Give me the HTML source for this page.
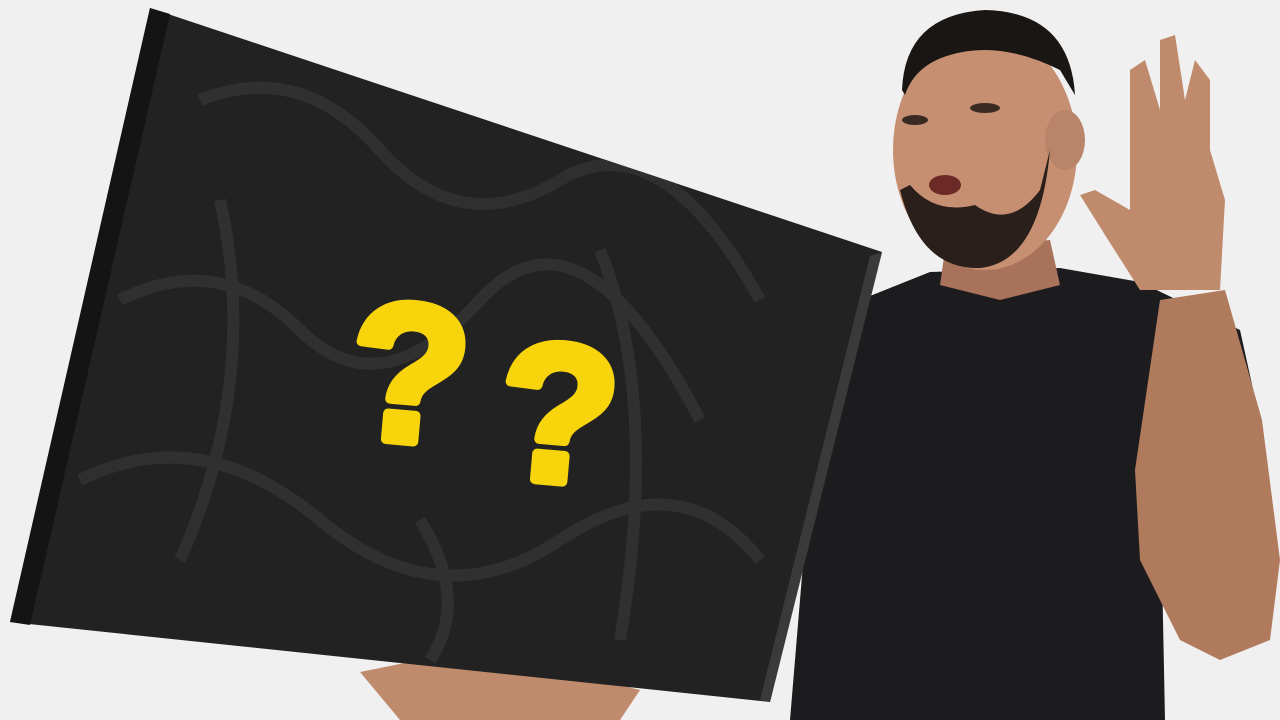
<!DOCTYPE html>
<html><head><style>
html,body{margin:0;padding:0;width:1280px;height:720px;overflow:hidden;background:#efefef}
</style></head><body>
<svg width="1280" height="720" viewBox="0 0 1280 720" xmlns="http://www.w3.org/2000/svg">
<defs><clipPath id="bc"><path d="M150 8 L882 252 L770 702 L10 622 Z"/></clipPath></defs>
<rect width="1280" height="720" fill="#f0f0f0"/>
<!-- shirt -->
<path d="M790 720 L815 420 L860 300 L930 272 L1060 268 L1140 282 L1240 330 L1262 430 L1160 470 L1165 720 Z" fill="#1c1c1e"/>
<!-- arm -->
<path d="M1135 470 L1160 300 L1225 290 L1262 420 L1280 560 L1270 640 L1220 660 L1180 640 L1140 560 Z" fill="#b07a5c"/>
<!-- hand raised -->
<path d="M1140 290 L1105 235 L1080 195 L1095 190 L1130 210 L1130 130 L1130 70 L1145 60 L1160 110 L1160 40 L1175 35 L1185 100 L1195 60 L1210 80 L1210 150 L1225 200 L1220 290 Z" fill="#c08a6c"/>
<!-- neck -->
<path d="M945 250 L1050 240 L1060 285 L1000 300 L940 285 Z" fill="#a8735a"/>
<!-- head -->
<ellipse cx="985" cy="150" rx="92" ry="120" fill="#c68f72"/>
<ellipse cx="1065" cy="140" rx="20" ry="30" fill="#b98469"/>
<!-- hair -->
<path d="M902 90 Q905 15 985 10 Q1070 12 1075 95 L1060 70 Q1000 40 950 55 Q915 65 905 95 Z" fill="#1a1614"/>
<!-- beard -->
<path d="M900 190 Q920 270 980 268 Q1040 262 1050 150 L1040 190 Q1010 230 975 205 Q935 215 910 185 Z" fill="#2a1f1a"/>
<ellipse cx="945" cy="185" rx="16" ry="10" fill="#6b2a25"/>
<ellipse cx="915" cy="120" rx="13" ry="5" fill="#3a2a22"/>
<ellipse cx="985" cy="108" rx="15" ry="5" fill="#3a2a22"/>
<!-- bottom hand -->
<path d="M360 672 L420 660 L560 670 L640 690 L620 720 L400 720 Z" fill="#c08a6c"/>
<!-- box -->
<path d="M150 8 L882 252 L770 702 L10 622 Z" fill="#222222"/>
<g clip-path="url(#bc)" fill="none" stroke="#343434" stroke-width="12" opacity="0.8">
<path d="M200 100 Q300 60 380 150 T560 180 T760 300"/>
<path d="M120 300 Q220 250 300 330 T480 300 T700 420"/>
<path d="M80 480 Q200 420 320 520 T560 540 T760 560"/>
<path d="M220 200 Q260 380 180 560"/>
<path d="M600 250 Q660 400 620 640"/>
<path d="M420 520 Q470 600 430 660"/>
</g>
<path d="M150 8 L170 14 L30 625 L10 622 Z" fill="#141414"/>
<path d="M882 252 L870 256 L760 700 L770 702 Z" fill="#3a3a3a"/>
<g font-family="Liberation Sans, sans-serif" font-weight="bold" font-size="195" fill="#f7d40b" stroke="#f7d40b" stroke-width="10" stroke-linejoin="round" transform="rotate(5 490 400)">
<text x="348" y="448">?</text><text x="500" y="475">?</text>
</g>
</svg>
</body></html>
